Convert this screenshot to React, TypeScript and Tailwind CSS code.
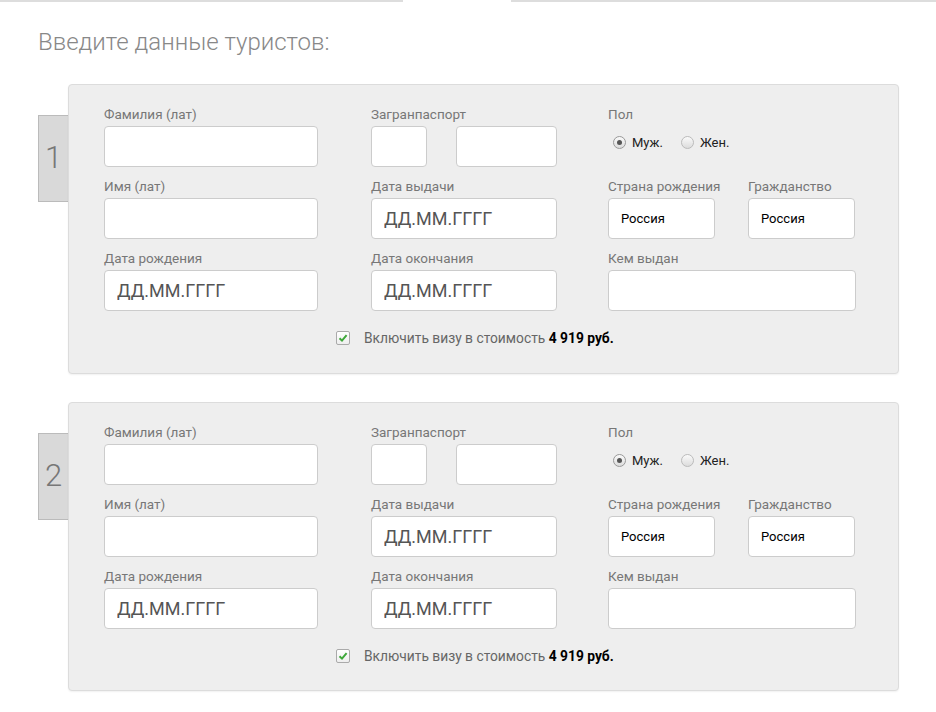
import React from "react"

const labelCls = "block h-[20px] text-[13.5px] leading-[16px] text-[#777]"
const inputCls =
    "block h-[41px] w-full rounded-[4px] border border-[#ccc] bg-white px-[12px] text-[13px] text-black outline-none"
const dateCls =
    "block h-[41px] w-full rounded-[4px] border border-[#ccc] bg-white px-[12px] text-[18px] text-[#555] outline-none placeholder:text-[#555]"

function Field({ label, date, value }: { label: string; date?: boolean; value?: string }) {
    return (
        <div>
            <span className={labelCls}>{label}</span>
            <input
                className={date ? dateCls : inputCls}
                placeholder={date ? "ДД.ММ.ГГГГ" : ""}
                defaultValue={value}
            />
        </div>
    )
}

function Radio({ checked, label }: { checked?: boolean; label: string }) {
    return (
        <label className="flex items-center">
            <span
                className={
                    "flex h-[13px] w-[13px] items-center justify-center rounded-full border bg-gradient-to-b from-[#fafafa] to-[#dcdcdc] " +
                    (checked ? "border-[#999]" : "border-[#bbb]")
                }
            >
                {checked && <span className="h-[5px] w-[5px] rounded-full bg-[#555]" />}
            </span>
            <span className="ml-[6px] text-[13px] text-[#222]">{label}</span>
        </label>
    )
}

function Tourist({ n }: { n: number }) {
    return (
        <div className="flex">
            {/* номер туриста */}
            <div className="mt-[31px] flex h-[87px] w-[30px] items-center justify-center border border-r-0 border-[#bbb] bg-[#d9d9d9] text-[31px] font-light text-[#777]">
                {n}
            </div>
            <div className="w-[831px] rounded-[4px] border border-[#dcdcdc] bg-[#eeeeee] pb-[24px] pl-[35px] pt-[21px] shadow-[0_1px_2px_rgba(0,0,0,0.06)]">
                <div className="flex">
                    <div className="flex w-[214px] flex-col gap-[11px]">
                        <Field label="Фамилия (лат)" />
                        <Field label="Имя (лат)" />
                        <Field label="Дата рождения" date />
                    </div>
                    <div className="ml-[53px] flex w-[186px] flex-col gap-[11px]">
                        <div>
                            <span className={labelCls}>Загранпаспорт</span>
                            <div className="flex justify-between">
                                <input className={inputCls + " !w-[56px]"} />
                                <input className={inputCls + " !w-[101px]"} />
                            </div>
                        </div>
                        <Field label="Дата выдачи" date />
                        <Field label="Дата окончания" date />
                    </div>
                    <div className="ml-[51px] flex w-[248px] flex-col gap-[11px]">
                        <div className="h-[61px]">
                            <span className={labelCls}>Пол</span>
                            <div className="flex gap-[18px] pl-[5px] pt-[7px]">
                                <Radio checked label="Муж." />
                                <Radio label="Жен." />
                            </div>
                        </div>
                        <div className="flex gap-[33px]">
                            <div className="w-[107px] shrink-0">
                                <span className={labelCls + " whitespace-nowrap"}>Страна рождения</span>
                                <input className={inputCls} defaultValue="Россия" />
                            </div>
                            <div className="w-[107px] shrink-0">
                                <span className={labelCls}>Гражданство</span>
                                <input className={inputCls} defaultValue="Россия" />
                            </div>
                        </div>
                        <Field label="Кем выдан" />
                    </div>
                </div>
                <div className="mt-[17px] flex items-center pl-[232px]">
                    <span className="flex h-[14px] w-[14px] items-center justify-center rounded-[2px] border border-[#aaa] bg-gradient-to-b from-white to-[#eee]">
                        <svg width="10" height="10" viewBox="0 0 10 10">
                            <path d="M1.5 5.2 L4 7.6 L8.6 2.2" fill="none" stroke="#3ea83a" strokeWidth="2" />
                        </svg>
                    </span>
                    <span className="ml-[14px] text-[13.8px] text-[#666]">
                        Включить визу в стоимость <b className="font-bold text-black">4 919 руб.</b>
                    </span>
                </div>
            </div>
        </div>
    )
}

export default function App() {
    return (
        <div className="h-[712px] w-[936px] bg-white" style={{ fontFamily: "Roboto, 'Liberation Sans', sans-serif" }}>
            <div className="flex h-[2px]">
                <div className="w-[403px] bg-[#ddd]" />
                <div className="ml-[108px] flex-1 bg-[#ddd]" />
            </div>
            <div className="pl-[38px]">
                <h2 className="pt-[26px] text-[24px] font-light leading-[28px] text-[#888]">
                    Введите данные туристов:
                </h2>
                <div className="mt-[28px] flex flex-col gap-[28px]">
                    <Tourist n={1} />
                    <Tourist n={2} />
                </div>
            </div>
        </div>
    )
}
